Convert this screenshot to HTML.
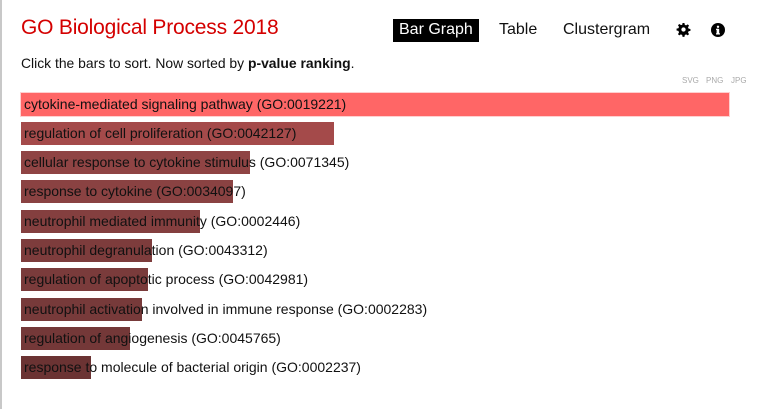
<!DOCTYPE html>
<html><head><style>
body{margin:0;width:757px;height:409px;background:#fff;font-family:"Liberation Sans",sans-serif;position:relative;overflow:hidden}
.lb{position:absolute;left:0;top:0;width:2px;height:409px;background:#c8c8c8}
h1{position:absolute;left:21px;top:16px;margin:0;font-size:21px;font-weight:normal;color:#d40000;letter-spacing:-0.2px}
.sub{position:absolute;left:21px;top:55px;font-size:13.9px;color:#111}
.nav{position:absolute;top:21px;font-size:16px;color:#111}
.bg{position:absolute;left:393px;top:19px;width:86px;height:23px;background:#000}
.exp{position:absolute;top:76px;font-size:8px;color:#aaa}
.bar{position:absolute;left:21px;height:23px}
.t{position:absolute;left:24px;font-size:14px;color:#111;line-height:23px;white-space:nowrap}
</style></head><body>
<div class="lb"></div>
<h1>GO Biological Process 2018</h1>
<div class="sub">Click the bars to sort. Now sorted by <b>p-value ranking</b>.</div>
<div class="bg"></div>
<div class="nav" style="left:399px;color:#fff">Bar Graph</div>
<div class="nav" style="left:499px">Table</div>
<div class="nav" style="left:563px">Clustergram</div>
<svg style="position:absolute;left:676px;top:22px" width="15" height="15" viewBox="0 0 16 16"><path fill="#000" d="M7 1h2l.4 2 1.4.6 1.7-1.1 1.4 1.4-1.1 1.7.6 1.4 2 .4v2l-2 .4-.6 1.4 1.1 1.7-1.4 1.4-1.7-1.1-1.4.6-.4 2H7l-.4-2-1.4-.6-1.7 1.1-1.4-1.4 1.1-1.7L2.6 9.4 .6 9V7l2-.4.6-1.4-1.1-1.7 1.4-1.4 1.7 1.1L6.6 3z"/><circle cx="8" cy="8" r="2.3" fill="#fff"/></svg>
<svg style="position:absolute;left:711px;top:23px" width="14" height="14" viewBox="0 0 14 14"><circle cx="7" cy="7" r="7" fill="#000"/><circle cx="7" cy="3.8" r="1.2" fill="#fff"/><rect x="5.6" y="5.8" width="2.6" height="5.2" fill="#fff"/><rect x="5" y="10.3" width="4" height="1.2" fill="#fff"/><rect x="5" y="5.8" width="2" height="1.1" fill="#fff"/></svg>
<div class="exp" style="left:682px">SVG</div><div class="exp" style="left:706px">PNG</div><div class="exp" style="left:731px">JPG</div>

<div class="bar" style="top:93px;width:708px;background:#ff6666;box-shadow:0 0 0 1px #ffd0d0"></div><div class="t" style="top:93px">cytokine-mediated signaling pathway (GO:0019221)</div>
<div class="bar" style="top:122px;width:313px;background:#a44a4a"></div><div class="t" style="top:122px">regulation of cell proliferation (GO:0042127)</div>
<div class="bar" style="top:151px;width:229px;background:#8f4444"></div><div class="t" style="top:151px">cellular response to cytokine stimulus (GO:0071345)</div>
<div class="bar" style="top:180px;width:212px;background:#8a4242"></div><div class="t" style="top:180px">response to cytokine (GO:0034097)</div>
<div class="bar" style="top:210px;width:179px;background:#843f3f"></div><div class="t" style="top:210px">neutrophil mediated immunity (GO:0002446)</div>
<div class="bar" style="top:239px;width:131px;background:#7d3c3c"></div><div class="t" style="top:239px">neutrophil degranulation (GO:0043312)</div>
<div class="bar" style="top:268px;width:127px;background:#7a3b3b"></div><div class="t" style="top:268px">regulation of apoptotic process (GO:0042981)</div>
<div class="bar" style="top:298px;width:121px;background:#773a3a"></div><div class="t" style="top:298px">neutrophil activation involved in immune response (GO:0002283)</div>
<div class="bar" style="top:327px;width:109px;background:#743838"></div><div class="t" style="top:327px">regulation of angiogenesis (GO:0045765)</div>
<div class="bar" style="top:356px;width:70px;background:#6b3333"></div><div class="t" style="top:356px">response to molecule of bacterial origin (GO:0002237)</div>
</body></html>
